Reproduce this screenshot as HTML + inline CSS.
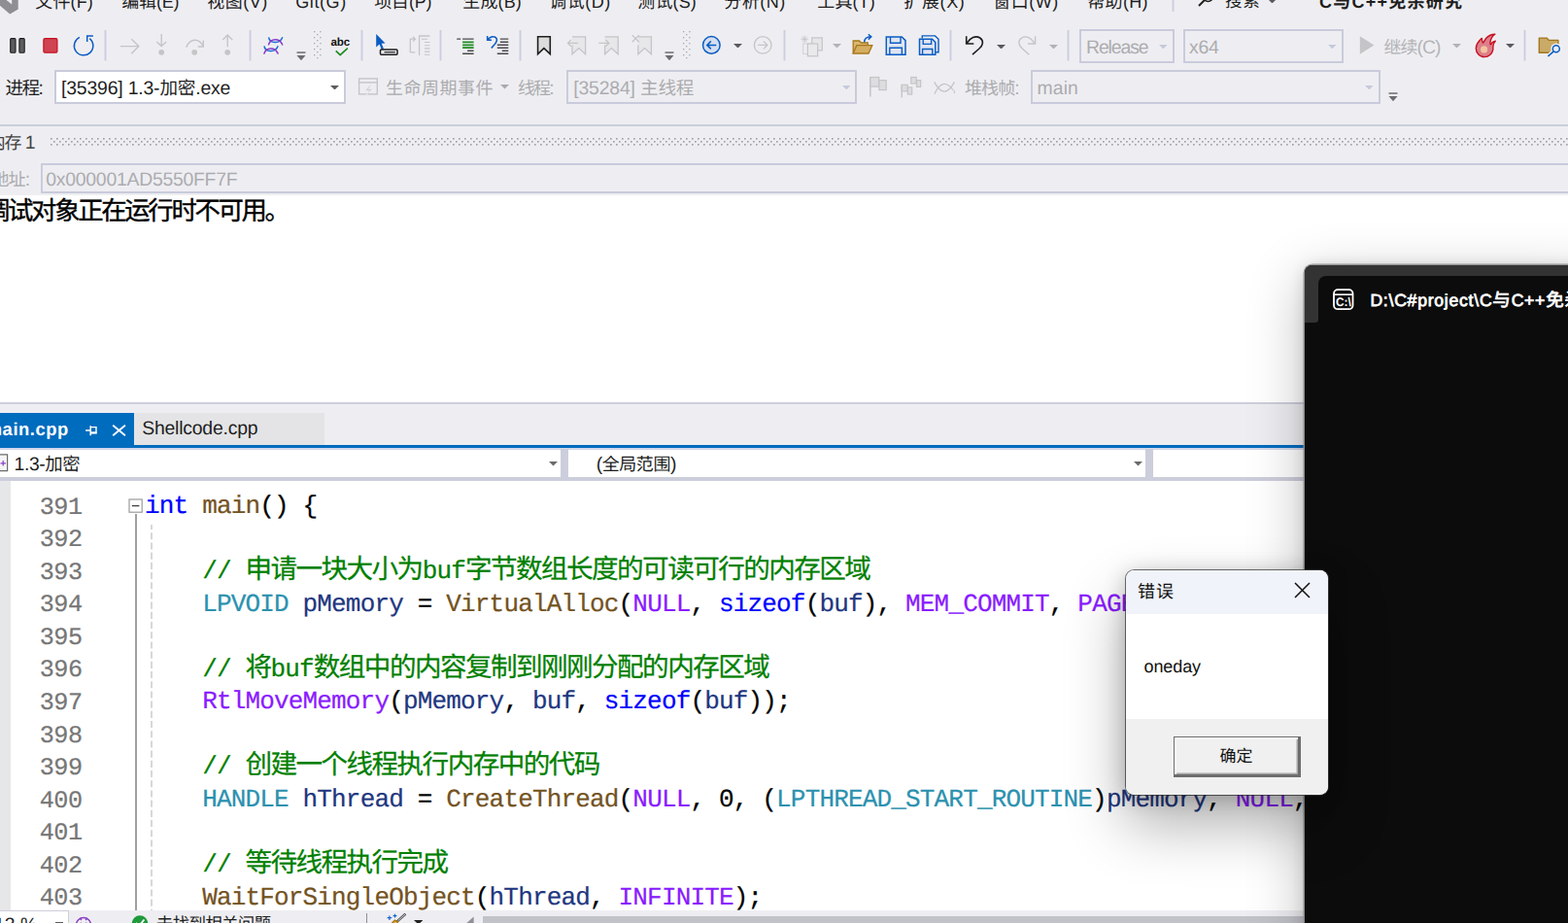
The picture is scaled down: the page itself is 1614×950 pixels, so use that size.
<!DOCTYPE html>
<html><head><meta charset="utf-8"><title>Visual Studio</title><style>
html,body{margin:0;padding:0}
body{width:1614px;height:950px;overflow:hidden;position:relative;background:#eeeef2;font-family:"Liberation Sans","Noto Sans CJK SC",sans-serif;text-rendering:geometricPrecision;font-kerning:none;}
.r{position:absolute;display:block}
.t{position:absolute;white-space:pre;line-height:1.3em;display:block}
.m{font-family:"Liberation Mono","Noto Sans CJK SC",monospace;-webkit-text-stroke:.22px}
.sb{-webkit-text-stroke:.75px}
.k{font-size:27.6px;letter-spacing:-1.57px;line-height:1}
.z{line-height:1}
</style></head><body>
<span class="t" id="r36_8" style="left:36.30px;top:-9px;font-size:18px;color:#1e1e1e;letter-spacing:0.139px;">文件(F)</span>
<span class="t" id="r125_8" style="left:125.30px;top:-9px;font-size:18px;color:#1e1e1e;letter-spacing:-0.200px;">编辑(E)</span>
<span class="t" id="r213_8" style="left:213.30px;top:-9px;font-size:18px;color:#1e1e1e;letter-spacing:0.467px;">视图(V)</span>
<span class="t" id="r304_8" style="left:304.30px;top:-9px;font-size:18px;color:#1e1e1e;letter-spacing:0.567px;">Git(G)</span>
<span class="t" id="r385_8" style="left:385.30px;top:-9px;font-size:18px;color:#1e1e1e;letter-spacing:-0.200px;">项目(P)</span>
<span class="t" id="r476_8" style="left:476.30px;top:-9px;font-size:18px;color:#1e1e1e;letter-spacing:0.133px;">生成(B)</span>
<span class="t" id="r565_8" style="left:565.30px;top:-9px;font-size:18px;color:#1e1e1e;letter-spacing:0.467px;">调试(D)</span>
<span class="t" id="r656_8" style="left:656.30px;top:-9px;font-size:18px;color:#1e1e1e;letter-spacing:0.133px;">测试(S)</span>
<span class="t" id="r745_8" style="left:745.30px;top:-9px;font-size:18px;color:#1e1e1e;letter-spacing:0.467px;">分析(N)</span>
<span class="t" id="r841_8" style="left:841.30px;top:-9px;font-size:18px;color:#1e1e1e;letter-spacing:0.139px;">工具(T)</span>
<span class="t" id="r930_8" style="left:930.30px;top:-9px;font-size:18px;color:#1e1e1e;letter-spacing:0.633px;">扩展(X)</span>
<span class="t" id="r1022_8" style="left:1022.30px;top:-9px;font-size:18px;color:#1e1e1e;letter-spacing:0.472px;">窗口(W)</span>
<span class="t" id="r1119_8" style="left:1119.30px;top:-9px;font-size:18px;color:#1e1e1e;letter-spacing:0.300px;">帮助(H)</span>
<svg class="r" style="left:1206.0px;top:-5px;" width="3" height="17" viewBox="0 0 3 17"><rect x="0.55" y="0" width="1.9" height="17" fill="#cccedb"/></svg>
<svg class="r" style="left:1260.60px;top:-8.54px;fill:#1e1e1e;overflow:visible" width="36.40" height="18" viewBox="0 0 2022 1000" role="img" aria-label="搜索"><text x="6" y="880" font-size="1000" letter-spacing="11" font-family="'Liberation Sans','Noto Sans CJK SC',sans-serif">搜索</text></svg>
<svg class="r" style="left:1305.0px;top:-1.05px;" width="9" height="4.5" viewBox="0 0 9 4.5"><path d="M0 0H9L4.5 4.5Z" fill="#5a5a5a"/></svg>
<span class="t" id="r1358_8" style="left:1358.00px;top:-9px;font-size:18px;color:#1e1e1e;font-weight:bold;letter-spacing:1.242px;">C与C++免杀研究</span>
<svg class="r" style="left:0px;top:0px;" width="22" height="16" viewBox="0 0 22 16"><path d="M0 0V5.8L10.2 14.6L18.7 9.6V0H12.2V4.6L6.5 0Z" fill="#8e8e93"/></svg>
<svg class="r" style="left:1228px;top:-8px;" width="24" height="18" viewBox="0 0 24 18"><path d="M6 14L12 8" stroke="#1e1e1e" stroke-width="2" fill="none"/><circle cx="15.5" cy="4.5" r="5" fill="none" stroke="#1e1e1e" stroke-width="1.6"/></svg>
<span class="t" id="r6_97" style="left:5.50px;top:79px;font-size:19.4px;color:#1e1e1e;letter-spacing:-1.578px;"><span class="z" style="font-size:18.6px">进程</span>:</span>
<div class="r" style="left:56px;top:72px;width:300px;height:35px;box-sizing:border-box;border:2px solid #c9cbdc;background:#fff"></div>
<span class="t" id="r63_97" style="left:63.00px;top:79px;font-size:19.4px;color:#1e1e1e;letter-spacing:-0.178px;">[35396] 1.3-<span class="z" style="font-size:18.6px">加密</span>.exe</span>
<svg class="r" style="left:340.0px;top:87.55px;" width="9" height="4.5" viewBox="0 0 9 4.5"><path d="M0 0H9L4.5 4.5Z" fill="#5c5c5c"/></svg>
<span class="t" id="r397_97" style="left:397.00px;top:79px;font-size:19.4px;color:#acacaf;letter-spacing:0.500px;"><span class="z" style="font-size:18px">生命周期事件</span></span>
<svg class="r" style="left:515.0px;top:87.05px;" width="9" height="4.5" viewBox="0 0 9 4.5"><path d="M0 0H9L4.5 4.5Z" fill="#a9aaae"/></svg>
<span class="t" id="r533_97" style="left:533.00px;top:79px;font-size:19.4px;color:#acacaf;letter-spacing:-1.891px;"><span class="z" style="font-size:18px">线程</span>:</span>
<div class="r" style="left:583px;top:72px;width:299px;height:35px;box-sizing:border-box;border:2px solid #c9cbdc;background:#eeeef2"></div>
<span class="t" id="r590_97" style="left:590.30px;top:79px;font-size:19.4px;color:#acacaf;letter-spacing:-0.172px;">[35284] <span class="z" style="font-size:18.6px">主线程</span></span>
<svg class="r" style="left:866.7px;top:87.6px;" width="8.6" height="4.4" viewBox="0 0 8.6 4.4"><path d="M0 0H8.6L4.3 4.4Z" fill="#c6c9dc"/></svg>
<span class="t" id="r993_97" style="left:993.00px;top:79px;font-size:19.4px;color:#acacaf;letter-spacing:-0.891px;"><span class="z" style="font-size:18px">堆栈帧</span>:</span>
<div class="r" style="left:1061px;top:72px;width:360px;height:35px;box-sizing:border-box;border:2px solid #c9cbdc;background:#eeeef2"></div>
<span class="t" id="r1068_97" style="left:1067.50px;top:79px;font-size:19.4px;color:#acacaf;letter-spacing:0.117px;">main</span>
<svg class="r" style="left:1405.1000000000001px;top:87.6px;" width="8.6" height="4.4" viewBox="0 0 8.6 4.4"><path d="M0 0H8.6L4.3 4.4Z" fill="#c6c9dc"/></svg>
<div class="r" style="left:1111px;top:30px;width:98px;height:34.599999999999994px;box-sizing:border-box;border:2px solid #c9cbdc;background:#eeeef2"></div>
<span class="t" id="r1118_55" style="left:1118.00px;top:37px;font-size:19.4px;color:#acacaf;letter-spacing:-1.094px;">Release</span>
<svg class="r" style="left:1193.1000000000001px;top:45.8px;" width="8.6" height="4.4" viewBox="0 0 8.6 4.4"><path d="M0 0H8.6L4.3 4.4Z" fill="#c6c9dc"/></svg>
<div class="r" style="left:1218px;top:30px;width:165px;height:34.599999999999994px;box-sizing:border-box;border:2px solid #c9cbdc;background:#eeeef2"></div>
<span class="t" id="r1224_55" style="left:1224.00px;top:37px;font-size:19.4px;color:#acacaf;letter-spacing:-0.255px;">x64</span>
<svg class="r" style="left:1367.1000000000001px;top:45.8px;" width="8.6" height="4.4" viewBox="0 0 8.6 4.4"><path d="M0 0H8.6L4.3 4.4Z" fill="#c6c9dc"/></svg>
<span class="t" id="r1424_55" style="left:1424.50px;top:37px;font-size:19.4px;color:#b4b4b7;letter-spacing:-0.974px;"><span class="z" style="font-size:18px">继续</span>(C)</span>
<svg class="r" style="left:106.5px;top:31px;" width="3" height="31.5" viewBox="0 0 3 31.5"><rect x="0.55" y="0" width="1.9" height="31.5" fill="#cbcde0"/></svg>
<svg class="r" style="left:255.8px;top:31px;" width="3" height="31.5" viewBox="0 0 3 31.5"><rect x="0.55" y="0" width="1.9" height="31.5" fill="#cbcde0"/></svg>
<svg class="r" style="left:371.3px;top:31px;" width="3" height="31.5" viewBox="0 0 3 31.5"><rect x="0.55" y="0" width="1.9" height="31.5" fill="#cbcde0"/></svg>
<svg class="r" style="left:452.3px;top:31px;" width="3" height="31.5" viewBox="0 0 3 31.5"><rect x="0.55" y="0" width="1.9" height="31.5" fill="#cbcde0"/></svg>
<svg class="r" style="left:533.6px;top:31px;" width="3" height="31.5" viewBox="0 0 3 31.5"><rect x="0.55" y="0" width="1.9" height="31.5" fill="#cbcde0"/></svg>
<svg class="r" style="left:806.4px;top:31px;" width="3" height="31.5" viewBox="0 0 3 31.5"><rect x="0.55" y="0" width="1.9" height="31.5" fill="#cbcde0"/></svg>
<svg class="r" style="left:976.6px;top:31px;" width="3" height="31.5" viewBox="0 0 3 31.5"><rect x="0.55" y="0" width="1.9" height="31.5" fill="#cbcde0"/></svg>
<svg class="r" style="left:1097.5px;top:31px;" width="3" height="31.5" viewBox="0 0 3 31.5"><rect x="0.55" y="0" width="1.9" height="31.5" fill="#cbcde0"/></svg>
<svg class="r" style="left:1567.5px;top:31px;" width="3" height="31.5" viewBox="0 0 3 31.5"><rect x="0.55" y="0" width="1.9" height="31.5" fill="#cbcde0"/></svg>
<svg class="r" style="left:6px;top:34px" width="98" height="28" viewBox="6 34 98 28" fill="none" stroke-linecap="butt"><rect x="10.7" y="39.6" width="5.3" height="14.6" rx="1" fill="#5d5d60" stroke="#1e1e1e" stroke-width="1.1"/><rect x="19.9" y="39.6" width="5.3" height="14.6" rx="1" fill="#5d5d60" stroke="#1e1e1e" stroke-width="1.1"/><rect x="44.9" y="39.7" width="14" height="14.4" rx="1.3" fill="#cf4352" stroke="#c50f1f" stroke-width="1.2"/><path d="M81.9 38.4A9.7 9.7 0 1 0 92.3 39.7" stroke="#0b5cc2" stroke-width="1.5"/><path d="M89.7 43V37.1H95.9" stroke="#0b5cc2" stroke-width="1.5"/></svg>
<svg class="r" style="left:120px;top:32px" width="125" height="30" viewBox="120 32 125 30" fill="none" stroke-linecap="butt"><g stroke="#c5c5c7" stroke-width="1.4"><path d="M124 47.6H142.6M135.3 40.2L142.8 47.6L135.3 55.2"/><path d="M166.2 35V47M161.3 43L166.2 47.6L171.2 43"/><path d="M191.6 48.6C194 43.5 197.5 41.2 200.6 41.2C204.5 41.2 207.5 44 209 47.3M209.3 41.6V48H203.8"/><path d="M234.2 36V48.2M229.3 40.9L234.2 36L239.2 40.9"/></g><circle cx="166.2" cy="53.8" r="2.9" fill="#c5c5c7"/><circle cx="200.2" cy="53.8" r="2.9" fill="#c5c5c7"/><circle cx="234.2" cy="53.8" r="2.9" fill="#c5c5c7"/></svg>
<svg class="r" style="left:268px;top:34px" width="28" height="26" viewBox="268 34 28 26" fill="none" stroke-linecap="butt"><g stroke-width="1.5"><path d="M276.6 38.3C277.3 44.5 288 46 290.8 38.3" stroke="#1a6fd4"/><path d="M276.3 46.4C278.5 38.5 288 39.5 290.2 45.2" stroke="#8a38c9"/><path d="M272 47.3C272.7 53.5 283.4 55 286.2 47.3" stroke="#1a6fd4"/><path d="M271.7 55.6C273.9 47.7 283.4 48.7 285.6 54.4" stroke="#8a38c9"/><path d="M290.2 44.6L290.9 46.6M285.6 53.6L286.3 55.8" stroke="#8a38c9" stroke-width="1.3"/></g></svg>
<svg class="r" style="left:303.6px;top:51.6px" width="12.0" height="12.0" viewBox="303.6 51.6 12.0 12.0" fill="none" stroke-linecap="butt"><rect x="305.1" y="52.9" width="9" height="1.5" fill="#6d6d70"/><path d="M305.1 56.6H314.1L309.6 61.8Z" fill="#6d6d70"/></svg>
<svg class="r" style="left:683.4px;top:52.0px" width="12.0" height="12.0" viewBox="683.4 52.0 12.0 12.0" fill="none" stroke-linecap="butt"><rect x="684.9" y="53.3" width="9" height="1.5" fill="#6d6d70"/><path d="M684.9 57.0H693.9L689.4 62.2Z" fill="#6d6d70"/></svg>
<svg class="r" style="left:1428px;top:94.2px" width="12" height="12.0" viewBox="1428 94.2 12 12.0" fill="none" stroke-linecap="butt"><rect x="1429.5" y="95.5" width="9" height="1.5" fill="#6d6d70"/><path d="M1429.5 99.2H1438.5L1434 104.4Z" fill="#6d6d70"/></svg>
<svg class="r" style="left:322.4px;top:31.200000000000003px" width="10.0" height="31.299999999999997" viewBox="322.4 31.200000000000003 10.0 31.299999999999997" fill="none" stroke-linecap="butt"><g fill="#a4a6b0"><rect x="323.4" y="32.2" width="1.3" height="1.3"/><rect x="329.59999999999997" y="32.2" width="1.3" height="1.3"/><rect x="326.5" y="35.2" width="1.3" height="1.3"/><rect x="323.4" y="38.2" width="1.3" height="1.3"/><rect x="329.59999999999997" y="38.2" width="1.3" height="1.3"/><rect x="326.5" y="41.2" width="1.3" height="1.3"/><rect x="323.4" y="44.2" width="1.3" height="1.3"/><rect x="329.59999999999997" y="44.2" width="1.3" height="1.3"/><rect x="326.5" y="47.2" width="1.3" height="1.3"/><rect x="323.4" y="50.2" width="1.3" height="1.3"/><rect x="329.59999999999997" y="50.2" width="1.3" height="1.3"/><rect x="326.5" y="53.2" width="1.3" height="1.3"/><rect x="323.4" y="56.2" width="1.3" height="1.3"/><rect x="329.59999999999997" y="56.2" width="1.3" height="1.3"/><rect x="326.5" y="59.2" width="1.3" height="1.3"/></g></svg>
<svg class="r" style="left:702.2px;top:31.200000000000003px" width="10.0" height="31.299999999999997" viewBox="702.2 31.200000000000003 10.0 31.299999999999997" fill="none" stroke-linecap="butt"><g fill="#a4a6b0"><rect x="703.2" y="32.2" width="1.3" height="1.3"/><rect x="709.4000000000001" y="32.2" width="1.3" height="1.3"/><rect x="706.3000000000001" y="35.2" width="1.3" height="1.3"/><rect x="703.2" y="38.2" width="1.3" height="1.3"/><rect x="709.4000000000001" y="38.2" width="1.3" height="1.3"/><rect x="706.3000000000001" y="41.2" width="1.3" height="1.3"/><rect x="703.2" y="44.2" width="1.3" height="1.3"/><rect x="709.4000000000001" y="44.2" width="1.3" height="1.3"/><rect x="706.3000000000001" y="47.2" width="1.3" height="1.3"/><rect x="703.2" y="50.2" width="1.3" height="1.3"/><rect x="709.4000000000001" y="50.2" width="1.3" height="1.3"/><rect x="706.3000000000001" y="53.2" width="1.3" height="1.3"/><rect x="703.2" y="56.2" width="1.3" height="1.3"/><rect x="709.4000000000001" y="56.2" width="1.3" height="1.3"/><rect x="706.3000000000001" y="59.2" width="1.3" height="1.3"/></g></svg>
<span class="t" id="r341_47" style="left:340.60px;top:36px;font-size:11.6px;color:#111;font-weight:bold;letter-spacing:-0.195px;">abc</span>
<svg class="r" style="left:343px;top:48px" width="17" height="11" viewBox="343 48 17 11" fill="none" stroke-linecap="butt"><path d="M345.7 52.3L350.2 56.6L357.8 49.6" stroke="#1f8c23" stroke-width="1.7"/></svg>
<svg class="r" style="left:384px;top:33px" width="28" height="27" viewBox="384 33 28 27" fill="none" stroke-linecap="butt"><path d="M387.2 35.1V48.4L390.6 45.5L392.9 51.2L395 50.3L392.7 44.8L396.5 44.5Z" fill="#0b5cc2"/><rect x="391.5" y="51" width="17.5" height="5.3" rx="1" stroke="#1e1e1e" stroke-width="1.5"/><path d="M395.5 53.7H406.8" stroke="#1e1e1e" stroke-width="1.2"/></svg>
<svg class="r" style="left:418px;top:34px" width="28" height="26" viewBox="418 34 28 26" fill="none" stroke-linecap="butt"><g stroke="#c5c5c7" stroke-width="1.3"><path d="M431.6 57V37H442.4"/><path d="M422.3 53.8V40.2H427.3M425 37.8L427.4 40.2L425 42.6M422.3 53.8H427.3"/><path d="M434 40.3H440M437 43.5H442.4M437 46.7H442.4M437 49.9H442.4M437 53.1H442.4M437 56.3H442.4" stroke-width="1.1"/></g></svg>
<svg class="r" style="left:468px;top:36px" width="22" height="22" viewBox="468 36 22 22" fill="none" stroke-linecap="butt"><g stroke-width="1.4"><path d="M470.2 40.1H474.2M476.1 40.1H487.6M481.1 52.3H487.6M476.1 55.3H487.6" stroke="#4a4a4c"/><path d="M476.1 43.3H487.6M476.1 46.3H487.6M476.1 49.2H487.6" stroke="#1f8c23" stroke-width="1.7"/></g></svg>
<svg class="r" style="left:498px;top:34px" width="28" height="24" viewBox="498 34 28 24" fill="none" stroke-linecap="butt"><path d="M501.6 37V41.3H506M501.9 41C505 36.5 510.5 36.8 511.4 40.5C512 43.5 508.5 46.5 505.8 49.4" stroke="#0b5cc2" stroke-width="1.5"/><g stroke="#4a4a4c" stroke-width="1.4"><path d="M514.8 40.1H523.3M514.8 43.3H523.3M511.8 46.3H523.3M511.8 49.2H523.3M516.8 52.3H523.3M511.8 55.3H523.3"/></g></svg>
<svg class="r" style="left:550px;top:34px" width="22" height="26" viewBox="550 34 22 26" fill="none" stroke-linecap="butt"><path d="M553.6 37.8H566.3V55.6L559.9 49.7L553.6 55.6Z" fill="#dcdcdd" stroke="#1e1e1e" stroke-width="1.6" stroke-linejoin="miter"/></svg>
<svg class="r" style="left:580px;top:33px" width="96" height="27" viewBox="580 33 96 27" fill="none" stroke-linecap="butt"><path d="M589 37.9H602.6V55.8L595.8 49.6L589 55.8V46.5" fill="#e7e7ea" stroke="#c5c5c7" stroke-width="1.3"/><path d="M595 44.4H584.6M588 41L584.5 44.4L588 47.8" stroke="#c5c5c7" stroke-width="1.3"/><path d="M622.6 37.9H636.2V55.8L629.4 49.6L622.6 55.8V46.5" fill="#e7e7ea" stroke="#c5c5c7" stroke-width="1.3"/><path d="M616.2 44.4H626.8M623.4 41L626.9 44.4L623.4 47.8" stroke="#c5c5c7" stroke-width="1.3"/><path d="M656.8 37.9H670.4V55.8L663.5999999999999 49.6L656.8 55.8V46.5" fill="#e7e7ea" stroke="#c5c5c7" stroke-width="1.3"/><path d="M650.7 36.1L657.8 43.2M657.8 36.1L650.7 43.2" stroke="#c5c5c7" stroke-width="1.3"/></svg>
<svg class="r" style="left:720px;top:34px" width="80" height="26" viewBox="720 34 80 26" fill="none" stroke-linecap="butt"><circle cx="732.3" cy="46.4" r="8.8" fill="#d5deef" stroke="#0b5cc2" stroke-width="1.5"/><path d="M737.3 46.4H728M731.8 42.4L727.8 46.4L731.8 50.4" stroke="#0b5cc2" stroke-width="1.5"/><circle cx="785.2" cy="46.4" r="8.8" stroke="#c5c5c7" stroke-width="1.3"/><path d="M780.2 46.4H789.7M785.9 42.4L789.9 46.4L785.9 50.4" stroke="#c5c5c7" stroke-width="1.3"/></svg>
<svg class="r" style="left:755.1px;top:44.75px;" width="9" height="4.5" viewBox="0 0 9 4.5"><path d="M0 0H9L4.5 4.5Z" fill="#5a5a5e"/></svg>
<svg class="r" style="left:820px;top:33px" width="30" height="28" viewBox="820 33 30 28" fill="none" stroke-linecap="butt"><g stroke="#c5c5c7" stroke-width="1.2"><rect x="835.8" y="38.9" width="10.5" height="13" fill="#e6e6e9"/><rect x="826.6" y="44.9" width="10" height="10.6" fill="#eeeef2" stroke="#d6d6d9"/><rect x="831.4" y="45" width="10.3" height="12.8" fill="#e9e9ec"/><path d="M828.2 36.6V44M824.5 40.3H831.9M825.6 37.7L830.8 42.9M830.8 37.7L825.6 42.9" stroke-width="0.9"/></g></svg>
<svg class="r" style="left:857.1px;top:44.75px;" width="9" height="4.5" viewBox="0 0 9 4.5"><path d="M0 0H9L4.5 4.5Z" fill="#b2b3b8"/></svg>
<svg class="r" style="left:874px;top:33px" width="28" height="25" viewBox="874 33 28 25" fill="none" stroke-linecap="butt"><path d="M878.2 55V42H884.5L886.3 44H893.3V46.5" stroke="#a9771a" stroke-width="1.3" fill="#d8b66f"/><path d="M878.2 55L881.8 46.7H897.8L894 55Z" fill="#d5ad62" stroke="#a9771a" stroke-width="1.3"/><path d="M889.7 43.6C889.7 39.6 892 37.8 896.6 37.8M893.8 35.2L896.8 37.8L893.8 40.6" stroke="#0b5cc2" stroke-width="1.5"/></svg>
<svg class="r" style="left:909px;top:35px" width="27" height="24" viewBox="909 35 27 24" fill="none" stroke-linecap="butt"><path d="M912.3 37.9H928.2L932 41.6V56.3H912.3Z" fill="#dfe5f2" stroke="#0b5cc2" stroke-width="1.5"/><path d="M916.5 38V44.3H927V38M915.8 56V49.2H928.4V56" stroke="#0b5cc2" stroke-width="1.4"/></svg>
<svg class="r" style="left:943px;top:34px" width="27" height="25" viewBox="943 34 27 25" fill="none" stroke-linecap="butt"><path d="M949.3 39.5V36.9H962.5L966 40.3V53.8H963.3" stroke="#0b5cc2" stroke-width="1.4"/><path d="M946.5 40.3H959.6L962.8 43.5V56.3H946.5Z" fill="#dfe5f2" stroke="#0b5cc2" stroke-width="1.5"/><path d="M950.2 40.5V45.4H958.6V40.5M949.6 56V50.5H959.8V56" stroke="#0b5cc2" stroke-width="1.4"/></svg>
<svg class="r" style="left:990px;top:34px" width="80" height="26" viewBox="990 34 80 26" fill="none" stroke-linecap="butt"><path d="M994.7 37.2V45H1002.3M995 44.7C998.5 38.8 1004.5 36.2 1008.7 39C1013.2 42.2 1011.5 47 1008 50L1001 56.2" stroke="#1e1e1e" stroke-width="1.6"/><path d="M1065.6 37.2V45H1058M1065.3 44.7C1061.8 38.8 1055.8 36.2 1051.6 39C1047.1 42.2 1048.8 47 1052.3 50L1059.3 56.2" stroke="#c5c5c7" stroke-width="1.4"/></svg>
<svg class="r" style="left:1025.9px;top:45.55px;" width="9" height="4.5" viewBox="0 0 9 4.5"><path d="M0 0H9L4.5 4.5Z" fill="#5a5a5e"/></svg>
<svg class="r" style="left:1079.7px;top:45.55px;" width="9" height="4.5" viewBox="0 0 9 4.5"><path d="M0 0H9L4.5 4.5Z" fill="#b2b3b8"/></svg>
<svg class="r" style="left:1397px;top:35px" width="20" height="23" viewBox="1397 35 20 23" fill="none" stroke-linecap="butt"><path d="M1399.8 37.2L1414.4 46.4L1399.8 55.7Z" fill="#c5c5c7"/></svg>
<svg class="r" style="left:1495.1px;top:44.55px;" width="9" height="4.5" viewBox="0 0 9 4.5"><path d="M0 0H9L4.5 4.5Z" fill="#b2b3b8"/></svg>
<svg class="r" style="left:1516px;top:33px" width="27" height="28" viewBox="1516 33 27 28" fill="none" stroke-linecap="butt"><path d="M1538.9 35.2C1536.5 36.6 1534.5 40.3 1533.9 43.5C1533.8 44.5 1534 45.3 1534.3 45.9C1535.5 43.8 1537.3 42.6 1539.3 42.3C1537.8 43.8 1537 45.5 1536.9 47.5C1536.8 49 1537 50.5 1536.6 51.9C1535.8 55.3 1532.5 58.6 1528.2 58.6C1523.5 58.6 1519.5 55 1519.3 50.2C1519.1 45.5 1522.3 42 1525.3 39.4C1525.3 41.2 1525.6 42.8 1526.5 44.1C1528 42.2 1529 40.2 1530.2 38.8C1532.3 36.6 1535.6 35.3 1538.9 35.2Z" fill="#dd7f8a" stroke="#c8101e" stroke-width="1.4" stroke-linejoin="round"/><circle cx="1527.5" cy="50.9" r="3.6" fill="#f2c4a2"/></svg>
<svg class="r" style="left:1550.0px;top:44.55px;" width="9" height="4.5" viewBox="0 0 9 4.5"><path d="M0 0H9L4.5 4.5Z" fill="#5a5a5e"/></svg>
<svg class="r" style="left:1580px;top:35px" width="32" height="26" viewBox="1580 35 32 26" fill="none" stroke-linecap="butt"><path d="M1584.3 39.1H1592.3L1594.2 41.4H1603.9V54.2H1584.3Z" fill="#c9aa67" stroke="#a3761d" stroke-width="1.4" stroke-linejoin="round"/><circle cx="1601.8" cy="50.2" r="5.6" fill="#eeeef2"/><path d="M1599.2 52.8L1593 58.4" stroke="#eeeef2" stroke-width="4.4"/><circle cx="1601.8" cy="50.2" r="3.5" fill="#e8eef8" stroke="#0b5cc2" stroke-width="1.5"/><path d="M1599.2 52.8L1593.4 58" stroke="#0b5cc2" stroke-width="1.6"/></svg>
<svg class="r" style="left:366px;top:78px" width="26" height="22" viewBox="366 78 26 22" fill="none" stroke-linecap="butt"><rect x="369.6" y="80.9" width="18.7" height="16" stroke="#c5c5c7" stroke-width="1.4"/><path d="M369.6 84.9H388.3" stroke="#c5c5c7" stroke-width="1.4"/><path d="M381 87.6L375.6 93.4H379.6L376.6 98.6L383.2 91.4H379.4L382.2 87.6Z" fill="#d0d0d2" stroke="#eeeef2" stroke-width="0.6"/></svg>
<svg class="r" style="left:892px;top:76px" width="94" height="26" viewBox="892 76 94 26" fill="none" stroke-linecap="butt"><g stroke="#c5c5c7" stroke-width="1.2" fill="#dddddf"><path d="M895.8 99.5V79.4" stroke-width="1.5"/><rect x="895.9" y="79.5" width="8.9" height="9.6"/><rect x="904.9" y="82.6" width="7.3" height="10"/><path d="M928.3 100.5V87.2" stroke-width="1.4"/><rect x="928.2" y="87.3" width="6" height="6.6"/><rect x="934.4" y="89.9" width="4.3" height="7.2"/><rect x="937.8" y="79.5" width="5.4" height="6.4"/><rect x="943.5" y="82.6" width="4.2" height="6.8"/></g><g stroke="#c5c5c7" stroke-width="1.3"><path d="M961.7 84.4Q972 104 982.4 84.4"/><path d="M961.9 96.6Q970.5 78.5 981 92.7"/><path d="M981.8 92.6L982.6 96.2" stroke-width="1.1"/></g></svg>
<div class="r" style="left:0px;top:128px;width:1614px;height:2px;background:#cccedb;"></div>
<span class="t" id="r-12_153" style="left:-12.30px;top:135px;font-size:19.4px;color:#444;letter-spacing:-1.086px;"><span class="z" style="font-size:18px">内存</span> 1</span>
<svg class="r" style="left:52px;top:142px;" width="1562" height="9" viewBox="0 0 1562 9"><defs><pattern id="gp" width="6" height="6" patternUnits="userSpaceOnUse"><rect x="0.1" y="0.1" width="1.5" height="1.5" fill="#909095"/><rect x="3.1" y="3.1" width="1.5" height="1.5" fill="#909095"/></pattern></defs><rect width="1562" height="8" fill="url(#gp)"/></svg>
<span class="t" id="r-9_191" style="left:-8.60px;top:173px;font-size:19.4px;color:#acacaf;letter-spacing:-0.891px;"><span class="z" style="font-size:18px">地址</span>:</span>
<div class="r" style="left:42px;top:168px;width:1582px;height:30.5px;box-sizing:border-box;border:2px solid #c9cbdc;background:#eeeef2"></div>
<span class="t" id="r47_191" style="left:47.30px;top:173px;font-size:19.4px;color:#acacaf;letter-spacing:-0.254px;">0x000001AD5550FF7F</span>
<div class="r" style="left:0px;top:200.5px;width:1614px;height:214px;background:#fff;"></div>
<svg class="r" style="left:-15.30px;top:202.52px;fill:#000;overflow:visible;stroke:#000;stroke-width:14" width="312.52" height="26" viewBox="0 0 12020 1000" role="img" aria-label="调试对象正在运行时不可用。"><text x="-38" y="880" font-size="1000" letter-spacing="-75" font-family="'Liberation Sans','Noto Sans CJK SC',sans-serif">调试对象正在运行时不可用。</text></svg>
<div class="r" style="left:0px;top:414px;width:1614px;height:2px;background:#cccedb;"></div>
<div class="r" style="left:0px;top:425px;width:138px;height:34px;background:#006cbe;"></div>
<div class="r" style="left:138px;top:425px;width:196px;height:33px;background:#e4e4e6;"></div>
<div class="r" style="left:0px;top:457.8px;width:1343px;height:3.2px;background:#006cbe;"></div>
<span class="t" id="r-14_448" style="left:-14.30px;top:430px;font-size:18.4px;color:#fff;font-weight:bold;letter-spacing:0.558px;">main.cpp</span>
<span class="t" id="r146_447" style="left:146.20px;top:429px;font-size:19.4px;color:#1e1e1e;letter-spacing:-0.202px;">Shellcode.cpp</span>
<svg class="r" style="left:86px;top:434px" width="48" height="18" viewBox="86 434 48 18" fill="none" stroke-linecap="butt"><g stroke="#fff" fill="none"><path d="M88.1 443H93.2M93.2 438.2V448.2" stroke-width="1.5"/><path d="M93.2 439.6H99V445.3H93.2" stroke-width="1.4"/><path d="M93.2 445.6H99.7" stroke-width="2"/><path d="M116.2 437.7L128.9 448.3M128.9 437.7L116.2 448.3" stroke-width="1.8"/></g></svg>
<div class="r" style="left:0px;top:461px;width:1343px;height:30px;background:#fff;"></div>
<div class="r" style="left:0px;top:460.9px;width:1343px;height:1.9px;background:#d3d7ea;"></div>
<div class="r" style="left:0px;top:491px;width:1343px;height:4px;background:#cccedb;"></div>
<div class="r" style="left:577px;top:461.5px;width:7.7px;height:29.5px;background:#cccedb;"></div>
<div class="r" style="left:1179px;top:461.5px;width:8px;height:29.5px;background:#cccedb;"></div>
<span class="t" id="r15_484" style="left:14.60px;top:466px;font-size:19.4px;color:#1e1e1e;letter-spacing:-0.426px;">1.3-<span class="z" style="font-size:18.4px">加密</span></span>
<span class="t" id="r614_484" style="left:613.80px;top:466px;font-size:19.4px;color:#1e1e1e;letter-spacing:-0.469px;">(<span class="z" style="font-size:18px">全局范围</span>)</span>
<svg class="r" style="left:565.0px;top:475.05px;" width="9" height="4.5" viewBox="0 0 9 4.5"><path d="M0 0H9L4.5 4.5Z" fill="#6a6a6a"/></svg>
<svg class="r" style="left:1167.0px;top:475.05px;" width="9" height="4.5" viewBox="0 0 9 4.5"><path d="M0 0H9L4.5 4.5Z" fill="#6a6a6a"/></svg>
<svg class="r" style="left:0px;top:466px;" width="10" height="20" viewBox="0 0 10 20"><path d="M-2 1.8H7.6V18.6H-2" fill="#f5f5f5" stroke="#6a6a6a" stroke-width="1.2"/><path d="M0.5 10.8H6M3.2 8V13.6" stroke="#8a3fc4" stroke-width="1.2"/></svg>
<div class="r" style="left:0px;top:495px;width:1343px;height:442.5px;background:#fff;"></div>
<div class="r" style="left:0px;top:495px;width:10.5px;height:442.5px;background:#e6e7e8;"></div>
<span class="t m" id="ln391" style="left:40.80px;top:507px;font-size:25.2px;color:#767676;letter-spacing:-0.570px;">391</span>
<span class="t m" id="ln392" style="left:40.80px;top:540px;font-size:25.2px;color:#767676;letter-spacing:-0.570px;">392</span>
<span class="t m" id="ln393" style="left:40.80px;top:574px;font-size:25.2px;color:#767676;letter-spacing:-0.570px;">393</span>
<span class="t m" id="ln394" style="left:40.80px;top:607px;font-size:25.2px;color:#767676;letter-spacing:-0.570px;">394</span>
<span class="t m" id="ln395" style="left:40.80px;top:641px;font-size:25.2px;color:#767676;letter-spacing:-0.570px;">395</span>
<span class="t m" id="ln396" style="left:40.80px;top:674px;font-size:25.2px;color:#767676;letter-spacing:-0.570px;">396</span>
<span class="t m" id="ln397" style="left:40.80px;top:708px;font-size:25.2px;color:#767676;letter-spacing:-0.570px;">397</span>
<span class="t m" id="ln398" style="left:40.80px;top:742px;font-size:25.2px;color:#767676;letter-spacing:-0.570px;">398</span>
<span class="t m" id="ln399" style="left:40.80px;top:775px;font-size:25.2px;color:#767676;letter-spacing:-0.570px;">399</span>
<span class="t m" id="ln400" style="left:40.80px;top:809px;font-size:25.2px;color:#767676;letter-spacing:-0.570px;">400</span>
<span class="t m" id="ln401" style="left:40.80px;top:842px;font-size:25.2px;color:#767676;letter-spacing:-0.570px;">401</span>
<span class="t m" id="ln402" style="left:40.80px;top:876px;font-size:25.2px;color:#767676;letter-spacing:-0.570px;">402</span>
<span class="t m" id="ln403" style="left:40.80px;top:909px;font-size:25.2px;color:#767676;letter-spacing:-0.570px;">403</span>
<span class="t m" id="c391" style="left:149.05px;top:505px;font-size:26.0px;color:#000;letter-spacing:-0.830px;"><span style="color:#0000ff">int</span><span style="color:#000"> </span><span style="color:#74531f">main</span><span style="color:#000">() {</span></span>
<span class="t m" id="c393" style="left:208.13px;top:572px;font-size:26.0px;color:#008000;letter-spacing:-0.830px;">// <span class="k">申请一块大小为</span>buf<span class="k">字节数组长度的可读可行的内存区域</span></span>
<span class="t m" id="c394" style="left:208.13px;top:606px;font-size:26.0px;color:#000;letter-spacing:-0.830px;"><span style="color:#2b91af">LPVOID</span><span style="color:#000"> </span><span style="color:#1f377f">pMemory</span><span style="color:#000"> = </span><span style="color:#74531f">VirtualAlloc</span><span style="color:#000">(</span><span style="color:#8a1bff">NULL</span><span style="color:#000">, </span><span style="color:#0000ff">sizeof</span><span style="color:#000">(</span><span style="color:#1f377f">buf</span><span style="color:#000">), </span><span style="color:#8a1bff">MEM_COMMIT</span><span style="color:#000">, </span><span style="color:#8a1bff">PAGE_EXECUTE_READWRITE</span><span style="color:#000">);</span></span>
<span class="t m" id="c396" style="left:208.13px;top:673px;font-size:26.0px;color:#008000;letter-spacing:-0.830px;">// <span class="k">将</span>buf<span class="k">数组中的内容复制到刚刚分配的内存区域</span></span>
<span class="t m" id="c397" style="left:208.13px;top:706px;font-size:26.0px;color:#000;letter-spacing:-0.830px;"><span style="color:#8a1bff">RtlMoveMemory</span><span style="color:#000">(</span><span style="color:#1f377f">pMemory</span><span style="color:#000">, </span><span style="color:#1f377f">buf</span><span style="color:#000">, </span><span style="color:#0000ff">sizeof</span><span style="color:#000">(</span><span style="color:#1f377f">buf</span><span style="color:#000">));</span></span>
<span class="t m" id="c399" style="left:208.13px;top:773px;font-size:26.0px;color:#008000;letter-spacing:-0.830px;">// <span class="k">创建一个线程执行内存中的代码</span></span>
<span class="t m" id="c400" style="left:208.13px;top:807px;font-size:26.0px;color:#000;letter-spacing:-0.830px;"><span style="color:#2b91af">HANDLE</span><span style="color:#000"> </span><span style="color:#1f377f">hThread</span><span style="color:#000"> = </span><span style="color:#74531f">CreateThread</span><span style="color:#000">(</span><span style="color:#8a1bff">NULL</span><span style="color:#000">, 0, (</span><span style="color:#2b91af">LPTHREAD_START_ROUTINE</span><span style="color:#000">)</span><span style="color:#1f377f">pMemory</span><span style="color:#000">, </span><span style="color:#8a1bff">NULL</span><span style="color:#000">, </span><span style="color:#8a1bff">NULL</span><span style="color:#000">);</span></span>
<span class="t m" id="c402" style="left:208.13px;top:874px;font-size:26.0px;color:#008000;letter-spacing:-0.830px;">// <span class="k">等待线程执行完成</span></span>
<span class="t m" id="c403" style="left:208.13px;top:908px;font-size:26.0px;color:#000;letter-spacing:-0.830px;"><span style="color:#74531f">WaitForSingleObject</span><span style="color:#000">(</span><span style="color:#1f377f">hThread</span><span style="color:#000">, </span><span style="color:#8a1bff">INFINITE</span><span style="color:#000">);</span></span>
<svg class="r" style="left:131px;top:512px;" width="18" height="18" viewBox="0 0 18 18"><rect x="2" y="2" width="13.2" height="13.2" fill="#fff" stroke="#9a9a9a" stroke-width="1.2"/><path d="M4.8 8.6H12.4" stroke="#444" stroke-width="1.4"/></svg>
<div class="r" style="left:139.3px;top:529px;width:1.5px;height:410px;background:#a0a0a0;"></div>
<svg class="r" style="left:154px;top:540.3px;" width="4" height="398" viewBox="0 0 4 398"><path d="M2 0V398" stroke="#c4c4c4" stroke-width="1.3" stroke-dasharray="7.1 3.1" stroke-dashoffset="2" fill="none"/></svg>
<div class="r" style="left:0px;top:937.3px;width:1343px;height:13px;background:#eeeef2;"></div>
<div class="r" style="left:0px;top:937.3px;width:71px;height:13px;background:#fff;"></div>
<div class="r" style="left:0px;top:937.3px;width:71px;height:1.2px;background:#cccedb;"></div>
<div class="r" style="left:70px;top:937.3px;width:1.3px;height:13px;background:#cccedb;"></div>
<span class="t" id="r-17_958" style="left:-16.80px;top:940px;font-size:19.4px;color:#1e1e1e;">113 %</span>
<div class="r" style="left:57px;top:948.5px;width:8px;height:2px;background:#5c5c5c;"></div>
<svg class="r" style="left:161.30px;top:942.46px;fill:#1e1e1e;overflow:visible" width="117.60" height="17.2" viewBox="0 0 6837 1000" role="img" aria-label="未找到相关问题"><text x="-12" y="880" font-size="1000" letter-spacing="-23" font-family="'Liberation Sans','Noto Sans CJK SC',sans-serif">未找到相关问题</text></svg>
<svg class="r" style="left:134px;top:940px;" width="20" height="12" viewBox="0 0 20 12"><circle cx="10" cy="10.5" r="8.3" fill="#1f9a3c"/><path d="M6 10L9 13L14.5 6.5" stroke="#fff" stroke-width="1.8" fill="none"/></svg>
<svg class="r" style="left:76px;top:940px;" width="20" height="12" viewBox="0 0 20 12"><circle cx="10" cy="12" r="7.5" fill="none" stroke="#8a3fc4" stroke-width="1.5"/><circle cx="7.3" cy="10.5" r="1.1" fill="#8a3fc4"/><circle cx="12.7" cy="10.5" r="1.1" fill="#8a3fc4"/><path d="M6 5L8 7M14 5L12 7" stroke="#8a3fc4" stroke-width="1.2"/></svg>
<div class="r" style="left:376.7px;top:939.8px;width:1.2px;height:11px;background:#8e8e92;"></div>
<svg class="r" style="left:396px;top:938px" width="26" height="12" viewBox="396 938 26 12" fill="none" stroke-linecap="butt"><path d="M417.4 940.6L408.6 948.6" stroke="#4a4a4c" stroke-width="2.6"/><path d="M417 941L409.5 947.8" stroke="#e8e8ea" stroke-width="0.9"/><path d="M403.5 950L406.5 947.2L410 949.5" stroke="#b07a14" stroke-width="1.6" fill="#d9a93c"/><path d="M398.6 944.7H403.2M400.9 942.4V947M404.6 942.6H408.4M406.5 940.7V944.5" stroke="#1c62d0" stroke-width="1.2"/></svg>
<svg class="r" style="left:425.7px;top:947.1px;" width="9.4" height="4.6" viewBox="0 0 9.4 4.6"><path d="M0 0H9.4L4.7 4.6Z" fill="#222"/></svg>
<svg class="r" style="left:478px;top:942px" width="12" height="8" viewBox="478 942 12 8" fill="none" stroke-linecap="butt"><path d="M487.6 943.4V950H480.4Z" fill="#8f9098"/></svg>
<div class="r" style="left:497px;top:943px;width:846px;height:8px;background:#c2c3c9;"></div>
<div class="r" style="left:1343px;top:273px;width:300px;height:700px;background:#0c0c0c;border-radius:8px;box-shadow:0 16px 56px 4px rgba(0,0,0,.23),0 2px 16px rgba(0,0,0,.15),0 0 0 1.5px rgba(168,168,168,.95);overflow:hidden">
<div class="r" style="left:0;top:0;width:300px;height:22px;background:#333"></div>
<div class="r" style="left:0;top:0;width:14px;height:59px;background:#333;border-radius:0 0 3px 0"></div>
<div class="r" style="left:14px;top:11.3px;width:300px;height:48px;background:#0c0c0c;border-radius:8px 0 0 0"></div>
</div>
<svg class="r" style="left:1370px;top:295px;" width="26" height="26" viewBox="0 0 26 26"><rect x="3" y="3.2" width="19.5" height="20" rx="4" fill="none" stroke="#fff" stroke-width="1.8"/><path d="M3 8.2H22.5" stroke="#fff" stroke-width="1.6"/><text x="4.9" y="20.2" font-family="Liberation Sans" font-weight="bold" font-size="12.4" fill="#fff" textLength="15.8" lengthAdjust="spacingAndGlyphs">C:\</text></svg>
<span class="t sb" id="r1410_315" style="left:1410.40px;top:298px;font-size:17.6px;color:#fff;letter-spacing:0.756px;">D:\C#project\C<span class="z" style="font-size:18.5px">与</span>C++<span class="z" style="font-size:18.5px">免杀</span></span>
<div class="r" style="left:1158.5px;top:586.5px;width:208px;height:231.5px;background:#fff;border-radius:8.5px;box-shadow:0 30px 60px 2px rgba(0,0,0,.30),0 3px 22px rgba(0,0,0,.22),0 0 0 1px rgba(70,70,70,.75);overflow:hidden">
<div class="r" style="left:0;top:0;width:208px;height:45px;background:#f0f3f9"></div>
<div class="r" style="left:0;top:153.5px;width:208px;height:80px;background:#f0f0f0"></div>
<div class="r" style="left:49px;top:171.5px;width:131.5px;height:41.5px;background:#f0f0f0;box-sizing:border-box;border:1px solid #6d6d6d;border-right:3px solid #6d6d6d;border-bottom:3px solid #6d6d6d;box-shadow:inset 2px 2px 0 #fff,inset -1.5px -1.5px 0 #a8a8a8"></div>
<svg class="r" style="left:172.6px;top:11.7px" width="20" height="20" viewBox="0 0 20 20"><path d="M2 2L17 17M17 2L2 17" stroke="#111" stroke-width="1.5" fill="none"/></svg>
</div>
<span class="t" id="r1171_615" style="left:1171.00px;top:598px;font-size:18px;color:#111;letter-spacing:1.000px;">错误</span>
<span class="t" id="r1178_692" style="left:1177.50px;top:675px;font-size:18px;color:#111;letter-spacing:-0.094px;">oneday</span>
<span class="t" id="r1256_784" style="left:1255.50px;top:768px;font-size:17px;color:#111;">确定</span>
</body></html>
